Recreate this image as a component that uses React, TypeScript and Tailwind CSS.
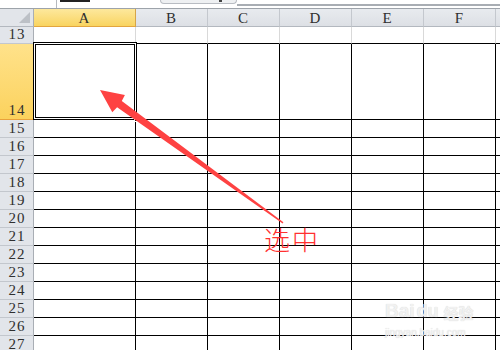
import React from 'react'

const cols = ['A', 'B', 'C', 'D', 'E', 'F', 'G']
const bodyRows = [15, 16, 17, 18, 19, 20, 21, 22, 23, 24, 25, 26, 27]

const gridCols = 'grid w-[568px] grid-cols-[34px_102px_72px_72px_72px_72px_72px_72px]'
const headFont = "[font-family:'Liberation_Serif','DejaVu_Serif',serif] text-[15px] tracking-[1px] text-[#2f2f2f]"

function RowHead({ n, h, selected }: { n: number; h: string; selected?: boolean }) {
  return (
    <div
      className={`${h} flex items-end justify-center pl-[1px] pb-[1px] leading-[15px] border-r border-r-[#a9aeb5] border-b ${
        selected
          ? 'bg-gradient-to-b from-[#ffe28a] to-[#fbd25c] border-b-[#e9a23b]'
          : 'bg-[#e2e5ea] border-b-[#c3c7cd]'
      } ${headFont}`}
    >
      {n}
    </div>
  )
}

export default function App() {
  return (
    <div className="relative w-[500px] h-[350px] overflow-hidden bg-white">

      {/* ── Formula bar remnant ───────────────────────────────────── */}
      <div className="flex h-[9px] border-b border-b-[#9da3aa] bg-white">
        <div className="w-[57px] border-r border-r-[#b5b9be]" />
        <div className="w-[103px] relative">
          <span className="absolute left-[3px] top-0 h-[2px] w-[30px] bg-[#222]" />
        </div>
        <div className="w-[77px] h-[4px] rounded-b-[6px] border border-t-0 border-[#b8bcc2] bg-[#eef0f2] relative">
          <span className="absolute right-[14px] top-0 h-[2px] w-[3px] bg-[#444]" />
        </div>
        <div className="flex-1 flex flex-col">
          <div className="h-[4px]" />
          <div className="h-[2px] border-t border-b border-[#a8adb3]" />
        </div>
      </div>

      {/* ── Column headers ────────────────────────────────────────── */}
      <div className={gridCols}>
        <div className="h-[18px] relative bg-[#e2e5ea] border-r border-r-[#a9aeb5] border-b border-b-[#b3b8bf]">
          <span className="absolute right-[3px] bottom-[3px] w-0 h-0 border-l-[11px] border-l-transparent border-b-[11px] border-b-[#bcc0c6]" />
        </div>
        {cols.map((c) => (
          <div
            key={c}
            className={`h-[18px] flex items-center justify-center leading-none pt-[1px] border-r border-b ${headFont} ${
              c === 'A'
                ? 'bg-gradient-to-b from-[#fde89c] to-[#f9d45f] border-r-[#d6a548] border-b-[#e3a53f]'
                : 'bg-gradient-to-b from-[#e8ebef] to-[#dde0e5] border-r-[#c4c8ce] border-b-[#b3b8bf]'
            }`}
          >
            {c === 'G' ? '' : c}
          </div>
        ))}
      </div>

      {/* ── Row 13 (no borders) ───────────────────────────────────── */}
      <div className={gridCols}>
        <RowHead n={13} h="h-[17px]" />
        {cols.map((c) => (
          <div key={c} className="h-[17px] border-r border-r-[#d9d9d9] border-b border-b-black" />
        ))}
      </div>

      {/* ── Row 14 (tall, selected) ───────────────────────────────── */}
      <div className={gridCols}>
        <RowHead n={14} h="h-[76px]" selected />
        {cols.map((c) => (
          <div key={c} className="relative h-[76px] border-r border-b border-black">
            {c === 'A' && (
              <>
                <div className="absolute -top-[2px] -left-[1px] -right-[2px] -bottom-[1px] border border-black shadow-[inset_0_0_0_1px_#fff,inset_0_0_0_2px_#000]" />
                <span className="absolute -right-[3px] -bottom-[3px] w-[4px] h-[4px] bg-black border border-white" />
              </>
            )}
          </div>
        ))}
      </div>

      {/* ── Rows 15–27 ────────────────────────────────────────────── */}
      {bodyRows.map((n) => (
        <div key={n} className={gridCols}>
          <RowHead n={n} h="h-[18px]" />
          {cols.map((c) => (
            <div key={c} className="h-[18px] border-r border-b border-black" />
          ))}
        </div>
      ))}

      {/* ── Annotation arrow ──────────────────────────────────────── */}
      <svg className="absolute inset-0 pointer-events-none" width="500" height="350" viewBox="0 0 500 350">
        <polygon
          points="100,90 124.9,94.9 121.8,100.9 283.4,222.3 282.6,223.5 117.1,107.3 112.3,112.2"
          fill="#fe4242"
        />
      </svg>

      <div className="absolute left-[264px] top-[226px] leading-none text-[26px] font-light text-[#ff3030] font-['Noto_Sans_CJK_SC',sans-serif] tracking-[2px]">
        选中
      </div>

      {/* ── Watermark ─────────────────────────────────────────────── */}
      <div className="absolute left-[385px] top-[301px] flex flex-col items-start text-[#f1f1f1] [text-shadow:0_0_1px_#cfcfcf] pointer-events-none">
        <div className="flex items-end gap-[2px] leading-none">
          <span className="text-[19px] font-bold [font-family:'Liberation_Sans',sans-serif]">Bai</span>
          <span className="text-[18px] font-bold [font-family:'Liberation_Sans',sans-serif]">du</span>
          <span className="text-[15px] font-bold [font-family:'Noto_Sans_CJK_SC',sans-serif] ml-[3px]">经验</span>
        </div>
        <span className="mt-[8px] text-[10px] leading-none [font-family:'Liberation_Sans',sans-serif]">
          jingyan.baidu.com
        </span>
      </div>
    </div>
  )
}
